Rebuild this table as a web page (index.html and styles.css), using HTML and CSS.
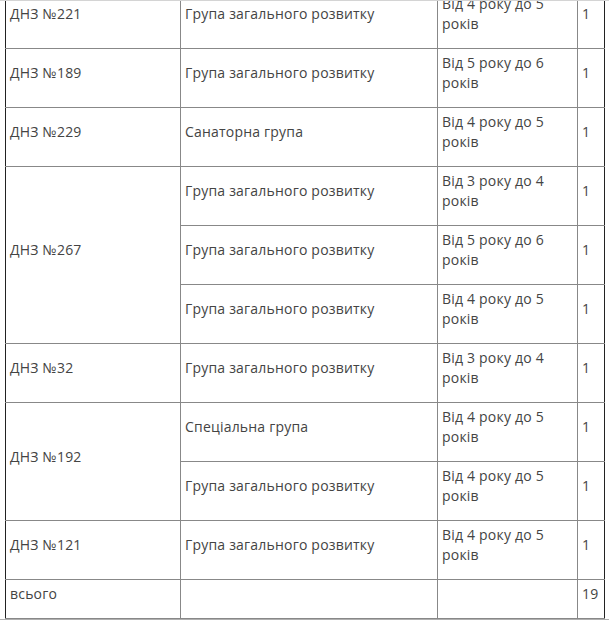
FILE: index.html
```html
<!DOCTYPE html>
<html lang="uk">
<head>
<meta charset="utf-8">
<title>Групи ДНЗ</title>
<link rel="stylesheet" href="styles.css">
</head>
<body>
<div class="frame">
  <table class="groups">
    <colgroup>
      <col class="c-name">
      <col class="c-group">
      <col class="c-age">
      <col class="c-count">
    </colgroup>
    <tbody>
      <tr>
        <td><p>ДНЗ №221</p></td>
        <td><p>Група загального розвитку</p></td>
        <td><p>Від 4 року до 5 років</p></td>
        <td><p>1</p></td>
      </tr>
      <tr>
        <td><p>ДНЗ №189</p></td>
        <td><p>Група загального розвитку</p></td>
        <td><p>Від 5 року до 6 років</p></td>
        <td><p>1</p></td>
      </tr>
      <tr>
        <td><p>ДНЗ №229</p></td>
        <td><p>Санаторна група</p></td>
        <td><p>Від 4 року до 5 років</p></td>
        <td><p>1</p></td>
      </tr>
      <tr>
        <td rowspan="3"><p>ДНЗ №267</p></td>
        <td><p>Група загального розвитку</p></td>
        <td><p>Від 3 року до 4 років</p></td>
        <td><p>1</p></td>
      </tr>
      <tr>
        <td><p>Група загального розвитку</p></td>
        <td><p>Від 5 року до 6 років</p></td>
        <td><p>1</p></td>
      </tr>
      <tr>
        <td><p>Група загального розвитку</p></td>
        <td><p>Від 4 року до 5 років</p></td>
        <td><p>1</p></td>
      </tr>
      <tr>
        <td><p>ДНЗ №32</p></td>
        <td><p>Група загального розвитку</p></td>
        <td><p>Від 3 року до 4 років</p></td>
        <td><p>1</p></td>
      </tr>
      <tr>
        <td rowspan="2"><p>ДНЗ №192</p></td>
        <td><p>Спеціальна група</p></td>
        <td><p>Від 4 року до 5 років</p></td>
        <td><p>1</p></td>
      </tr>
      <tr>
        <td><p>Група загального розвитку</p></td>
        <td><p>Від 4 року до 5 років</p></td>
        <td><p>1</p></td>
      </tr>
      <tr>
        <td><p>ДНЗ №121</p></td>
        <td><p>Група загального розвитку</p></td>
        <td><p>Від 4 року до 5 років</p></td>
        <td><p>1</p></td>
      </tr>
      <tr>
        <td><p>всього</p></td>
        <td></td>
        <td></td>
        <td><p>19</p></td>
      </tr>
    </tbody>
  </table>
</div>
</body>
</html>
```
FILE: styles.css
```css
html, body {
  margin: 0;
  padding: 0;
  background: #fff;
}

body {
  font-family: "Open Sans", "Liberation Sans", sans-serif;
  font-size: 14px;
  line-height: 20px;
  letter-spacing: 0.2px;
  color: #444;
}

.frame {
  border-top: 1px solid #d4d4d4;
  border-bottom: 1px solid #b0b0b0;
  padding: 0 5px;
  overflow: hidden;
}

.groups {
  width: 100%;
  table-layout: fixed;
  border-collapse: collapse;
  margin-top: -12px;
  border-left: 1px solid #222;
  border-right: 1px solid #222;
}

.c-name { width: 175px; }
.c-group { width: 257px; }
.c-age { width: 140px; }
.c-count { width: 27px; }

.groups td {
  border: 1px solid #888;
  padding: 4px;
  vertical-align: middle;
}

.groups td:first-child {
  border-left: 1px solid #222;
}

.groups td:last-child {
  border-right: 1px solid #222;
}

.groups tr td[rowspan] {
  border-left: 1px solid #222;
}

.groups p {
  margin: 0 0 10px;
}
```
